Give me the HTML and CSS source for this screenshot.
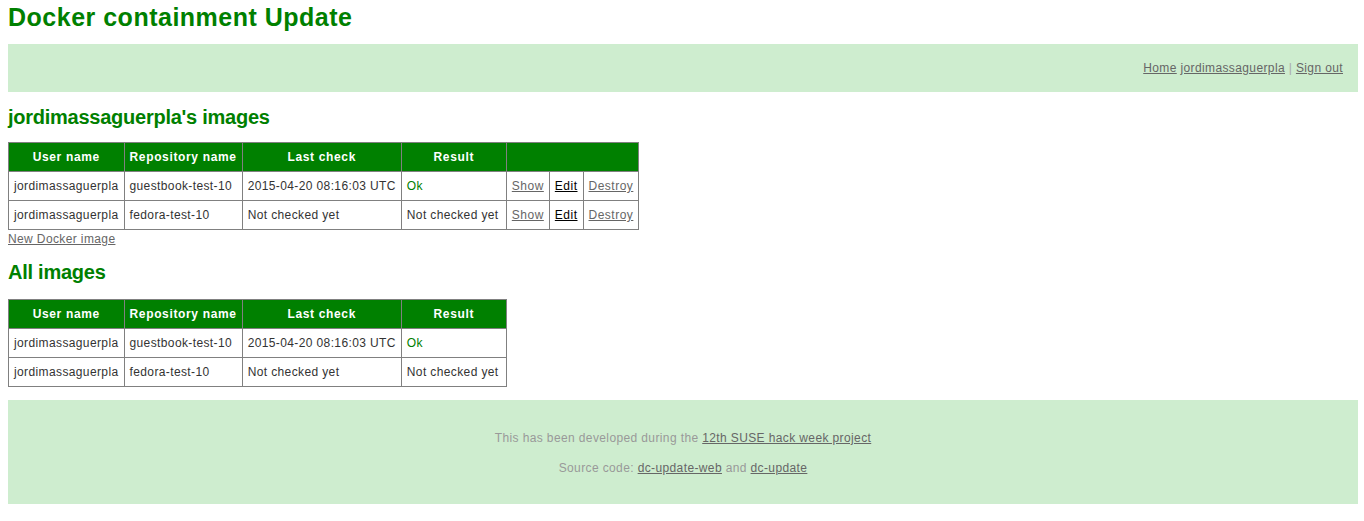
FILE: index.html
```html
<!DOCTYPE html>
<html>
<head>
<meta charset="utf-8">
<link rel="stylesheet" href="styles.css">
</head>
<body>
<h1 class="title">Docker containment Update</h1>
<div class="topbar">
  <a href="#">Home</a> <a href="#">jordimassaguerpla</a> <span class="sep">|</span> <a href="#">Sign out</a>
</div>
<h2 class="section">jordimassaguerpla's images</h2>
<table class="grid">
  <thead>
    <tr><th>User name</th><th>Repository name</th><th>Last check</th><th class="col-result">Result</th><th colspan="3"></th></tr>
  </thead>
  <tbody>
    <tr><td>jordimassaguerpla</td><td>guestbook-test-10</td><td>2015-04-20 08:16:03 UTC</td><td class="ok">Ok</td><td><a href="#">Show</a></td><td><a class="edit" href="#">Edit</a></td><td><a href="#">Destroy</a></td></tr>
    <tr><td>jordimassaguerpla</td><td>fedora-test-10</td><td>Not checked yet</td><td>Not checked yet</td><td><a href="#">Show</a></td><td><a class="edit" href="#">Edit</a></td><td><a href="#">Destroy</a></td></tr>
  </tbody>
</table>
<a class="newlink" href="#">New Docker image</a>
<h2 class="section all">All images</h2>
<table class="grid second">
  <thead>
    <tr><th>User name</th><th>Repository name</th><th>Last check</th><th class="col-result">Result</th></tr>
  </thead>
  <tbody>
    <tr><td>jordimassaguerpla</td><td>guestbook-test-10</td><td>2015-04-20 08:16:03 UTC</td><td class="ok">Ok</td></tr>
    <tr><td>jordimassaguerpla</td><td>fedora-test-10</td><td>Not checked yet</td><td>Not checked yet</td></tr>
  </tbody>
</table>
<div class="footer">
  <p>This has been developed during the <a href="#">12th SUSE hack week project</a></p>
  <p>Source code: <a href="#">dc-update-web</a> and <a href="#">dc-update</a></p>
</div>
</body>
</html>
```
FILE: styles.css
```css
html, body {
  margin: 0;
  padding: 0;
  background: #fff;
}
body {
  padding: 0 6px 0 8px;
  font-family: "Liberation Sans", Arial, sans-serif;
  font-size: 12px;
  letter-spacing: 0.38px;
  color: #333;
}
a {
  color: #666;
}
.title {
  margin: 0;
  padding-top: 3px;
  height: 41px;
  font-size: 25px;
  line-height: 28px;
  letter-spacing: 0.5px;
  font-weight: bold;
  color: #008000;
}
.topbar {
  background: #ceedcf;
  height: 48px;
  box-sizing: border-box;
  padding: 16px 15px 0 0;
  text-align: right;
  line-height: 16px;
}
.topbar .sep {
  color: #aaa;
}
.section {
  margin: 13px 0 0 0;
  font-size: 20px;
  line-height: 24px;
  letter-spacing: -0.25px;
  color: #008000;
}
.section.all {
  margin-top: 13px;
}
.grid {
  border-collapse: collapse;
  margin-top: 13px;
  font-size: 12px;
}
.grid.second {
  margin-top: 15px;
}
.grid th {
  background: #008000;
  color: #fff;
  font-weight: bold;
  letter-spacing: 0.65px;
  border: 1px solid #808080;
  padding: 7px 5px;
  height: 14px;
  line-height: 14px;
}
.grid th.col-result {
  width: 94px;
}
.grid td {
  border: 1px solid #808080;
  padding: 7px 5px;
  line-height: 14px;
  white-space: nowrap;
}
.grid td a {
  letter-spacing: 0.5px;
}
.grid td.ok {
  color: #008000;
}
.grid a.edit {
  color: #000;
}
.newlink {
  display: inline-block;
  margin-top: 1px;
  line-height: 16px;
}
.footer {
  margin-top: 13px;
  background: #ceedcf;
  height: 104px;
  box-sizing: border-box;
  padding-top: 30px;
  text-align: center;
  color: #999;
}
.footer p {
  margin: 0 0 14px 0;
  line-height: 16px;
}
```
